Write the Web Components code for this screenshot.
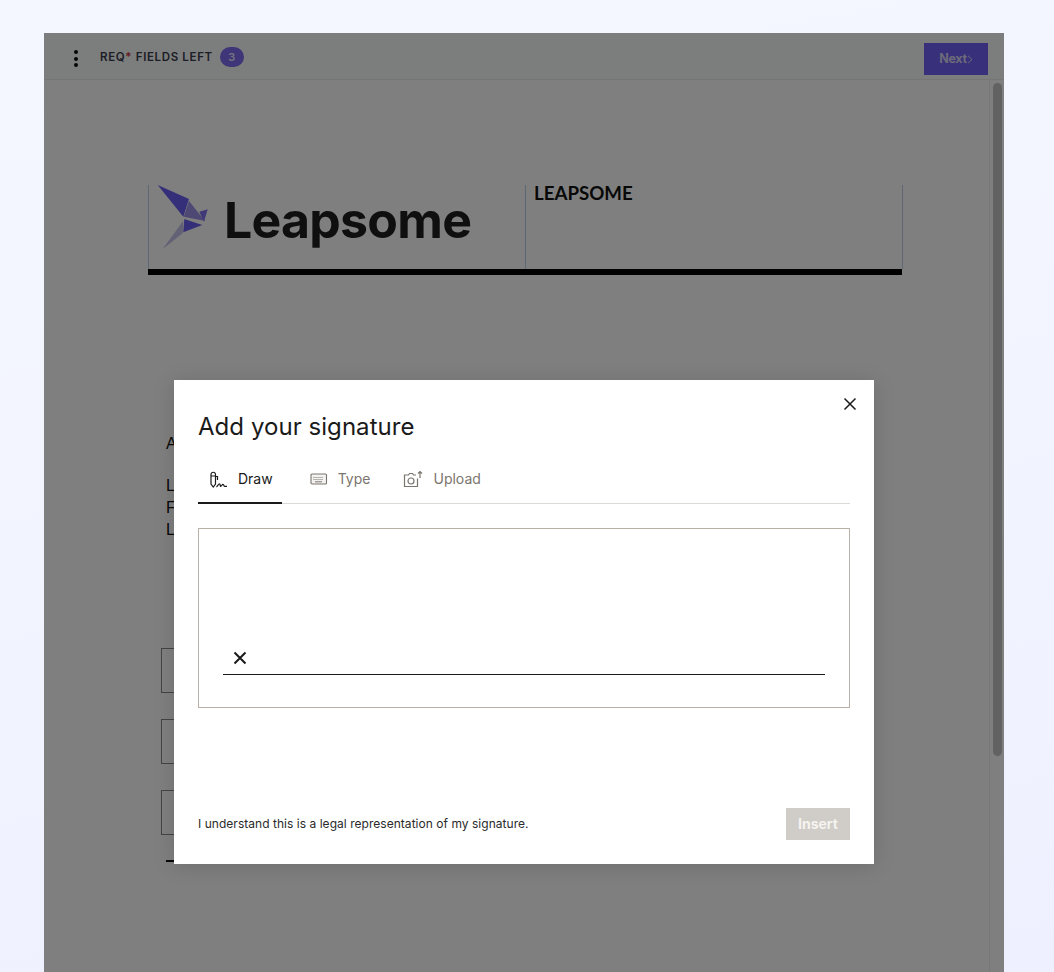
<!DOCTYPE html>
<html>
<head>
<meta charset="utf-8">
<style>
html, body { margin: 0; height: 972px; overflow: hidden; }
body {
  background: linear-gradient(170deg, #f4f7ff 0%, #f2f5ff 50%, #eef0ff 100%);
  padding: 33px 50px 0 44px;
  box-sizing: border-box;
  font-family: "Inter", "Liberation Sans", sans-serif;
}
</style>
</head>
<body>
<sign-frame>
  <sign-toolbar slot="toolbar" count="3"></sign-toolbar>
  <doc-view slot="doc"></doc-view>
  <signature-modal slot="modal"></signature-modal>
</sign-frame>

<script>
const frame_template = document.createElement('template');
frame_template.innerHTML = `
<style>
:host {
  display: block;
  position: relative;
  width: 960px;
  height: 939px;
  overflow: hidden;
  background: #fff;
}
#overlay {
  position: absolute;
  inset: 0;
  background: rgba(0, 0, 0, .5);
  display: flex;
  justify-content: center;
  align-items: flex-start;
  padding-top: 347px;
  box-sizing: border-box;
}
</style>
<slot name="toolbar"></slot>
<slot name="doc"></slot>
<div id="overlay"><slot name="modal"></slot></div>
`
class SignFrame extends HTMLElement {
  constructor() {
    super();
    this.attachShadow({ mode: 'open' });
    this.shadowRoot.appendChild(frame_template.content.cloneNode(true));
  }
}
customElements.define('sign-frame', SignFrame);

const toolbar_template = document.createElement('template');
toolbar_template.innerHTML = `
<style>
:host {
  display: flex;
  align-items: center;
  height: 47px;
  box-sizing: border-box;
  border-bottom: 1px solid #eaeaea;
  background: #f9fcfb;
  padding: 2px 16px 0 30px;
  color: #3a3a4c;
}
#dots { display: flex; flex-direction: column; gap: 2.5px; margin-right: 22px; margin-top: 3px; }
#dots i { display: block; width: 4px; height: 4px; border-radius: 50%; background: #0b0b0b; }
#label {
  font: 600 11.5px/1 "Inter", "Liberation Sans", sans-serif;
  letter-spacing: .65px;
  white-space: nowrap;
  margin-top: 2px;
}
#label b { color: #c2334a; font-weight: 600; }
#badge {
  margin-left: 7px;
  width: 24px;
  height: 20px;
  border-radius: 10px;
  background: #7c6df0;
  color: #e8e4ff;
  font: 600 11px/20px "Inter", "Liberation Sans", sans-serif;
  text-align: center;
}
#next {
  margin-left: auto;
  width: 64px;
  height: 32px;
  margin-top: 4px;
  background: #7060f5;
  color: #d8d4f4;
  font: 700 12.5px/32px "Inter", "Liberation Sans", sans-serif;
  letter-spacing: -.3px;
  display: flex;
  align-items: center;
  justify-content: center;
}
#next svg { display: block; }
</style>
<div id="dots"><i></i><i></i><i></i></div>
<div id="label">REQ<b>*</b> FIELDS LEFT</div>
<div id="badge"></div>
<div id="next">Next<svg width="6" height="9" viewBox="0 0 6 9" fill="none" stroke="#d8d4f4" stroke-width="1"><path d="M1 .8l4 3.700-4 3.700"/></svg></div>
`
class SignToolbar extends HTMLElement {
  constructor() {
    super();
    this.attachShadow({ mode: 'open' });
    this.shadowRoot.appendChild(toolbar_template.content.cloneNode(true));
    this.shadowRoot.querySelector('#badge').innerText = this.getAttribute('count');
  }
}
customElements.define('sign-toolbar', SignToolbar);

const doc_template = document.createElement('template');
doc_template.innerHTML = `
<style>
:host {
  display: flex;
  height: 892px;
  background: #fff;
}
#page {
  flex: 1;
  padding: 105px 0 0 104px;
  overflow: hidden;
}
#head {
  display: grid;
  grid-template-columns: 377px 377px;
  width: 755px;
  height: 84px;
  box-sizing: border-box;
  border-right: 1px solid #bcd0ea;
}
#head > div { border-left: 1px solid #bcd0ea; }
#bar { width: 754px; height: 6px; background: #000; }
#brand { display: flex; align-items: flex-start; }
#brand svg { display: block; flex: none; }
#wordmark {
  margin: 5px 0 0 15px;
  font: 700 50px/1.2 "Inter", "Liberation Sans", sans-serif;
  letter-spacing: -.75px;
  color: #1e1e1e;
}
#company {
  padding-left: 8px;
  font: 700 18.7px/17px "Lato", "Liberation Sans", sans-serif;
  color: #111;
}
#body {
  margin: 158px 0 0 18px;
  font: 16px/22px "Liberation Sans", sans-serif;
  color: #111;
}
#body p { margin: 0; }
#lines { margin-top: 20px !important; }
#fields { margin: 107px 0 0 13px; }
#fields div {
  width: 300px;
  height: 45px;
  box-sizing: border-box;
  border: 1px solid #888;
  margin-bottom: 26px;
}
#rule { width: 300px; height: 2px; background: #111; margin: -1px 0 0 18px; }
#gutter {
  flex: none;
  border-left: 1px solid #eceef0;
  padding: 3px 3px 0 3px;
  box-sizing: border-box;
  width: 15px;
}
#thumb { width: 9px; height: 673px; border-radius: 5px; background: #c4c4c4; }
</style>
<div id="page">
  <div id="head">
    <div id="brand">
      <svg width="60" height="72" viewBox="149 185 60 72">
        <polygon points="157.7,185 189,199 183.3,216.7" fill="#6b5ff2"/>
        <polygon points="189,201 205,221 183.7,216.7" fill="#9a93e8"/>
        <polygon points="184.3,219 202.3,225 183.3,232.3" fill="#6b5ff2"/>
        <polygon points="183.3,220.7 182.7,233.3 162.7,249" fill="#c4c2ea"/>
        <polygon points="199.3,211.7 207.7,209.3 204,221.7" fill="#7f74ee"/>
      </svg>
      <div id="wordmark">Leapsome</div>
    </div>
    <div id="company">LEAPSOME</div>
  </div>
  <div id="bar"></div>
  <div id="body">
    <p>A</p>
    <p id="lines">L<br>F<br>L</p>
  </div>
  <div id="fields"><div></div><div></div><div></div></div>
  <div id="rule"></div>
</div>
<div id="gutter"><div id="thumb"></div></div>
`
class DocView extends HTMLElement {
  constructor() {
    super();
    this.attachShadow({ mode: 'open' });
    this.shadowRoot.appendChild(doc_template.content.cloneNode(true));
  }
}
customElements.define('doc-view', DocView);

const tab_template = document.createElement('template');
tab_template.innerHTML = `
<style>
:host {
  display: flex;
  align-items: center;
  gap: 10px;
  height: 48px;
  padding: 0 9px 2px var(--tab-pad, 12px);
  margin-bottom: -1px;
  box-sizing: border-box;
  color: #7a756e;
  font: 14px/1 "Inter", "Liberation Sans", sans-serif;
}
:host([active]) {
  color: #1a1a1a;
  border-bottom: 2px solid #1a1a1a;
  padding-bottom: 0;
}
::slotted(svg) { display: block; }
</style>
<slot name="icon"></slot><slot></slot>
`
class SigTab extends HTMLElement {
  constructor() {
    super();
    this.attachShadow({ mode: 'open' });
    this.shadowRoot.appendChild(tab_template.content.cloneNode(true));
  }
}
customElements.define('sig-tab', SigTab);

const modal_template = document.createElement('template');
modal_template.innerHTML = `
<style>
:host {
  position: relative;
  width: 700px;
  height: 484px;
  box-sizing: border-box;
  padding: 24px;
  background: #fff;
  box-shadow: 0 2px 20px rgba(0, 0, 0, .14);
  color: #1a1a1a;
  display: flex;
  flex-direction: column;
}
#close { position: absolute; top: 16px; right: 16px; display: block; }
h2 {
  margin: 8px 0 0;
  font: 400 24px/30px "Inter", "Liberation Sans", sans-serif;
  letter-spacing: .05px;
  color: #1a1a1a;
}
#tabs {
  display: flex;
  gap: 15px;
  margin-top: 14px;
  border-bottom: 1px solid #dcdad7;
}
#pad {
  margin-top: 24px;
  height: 180px;
  box-sizing: border-box;
  border: 1px solid #b8b0a6;
  padding: 0 24px;
  display: flex;
  flex-direction: column;
  justify-content: flex-end;
}
#line {
  border-bottom: 1px solid #1a1a1a;
  padding: 0 0 9px 10px;
  margin-bottom: 32px;
}
#line svg { display: block; }
#foot {
  margin-top: auto;
  display: flex;
  align-items: center;
  justify-content: space-between;
}
#legal { font: 12px/16px "Inter", "Liberation Sans", sans-serif; letter-spacing: .035px; color: #2a2a2a; }
#insert {
  width: 64px;
  height: 32px;
  background: #d0ccc8;
  color: #f5f3f0;
  font: 700 14px/32px "Inter", "Liberation Sans", sans-serif;
  text-align: center;
}
</style>
<svg id="close" width="16" height="16" viewBox="0 0 16 16" fill="none" stroke="#1a1a1a" stroke-width="1.5"><path d="M2.5 2.5l11 11M13.5 2.5l-11 11"/></svg>
<h2>Add your signature</h2>
<div id="tabs"><slot name="tabs"></slot></div>
<div id="pad">
  <div id="line">
    <svg width="14" height="14" viewBox="0 0 14 14" fill="none" stroke="#1a1a1a" stroke-width="2"><path d="M1.5 1.5l11 11M12.5 1.5l-11 11"/></svg>
  </div>
</div>
<div id="foot">
  <div id="legal">I understand this is a legal representation of my signature.</div>
  <div id="insert">Insert</div>
</div>
`
class SignatureModal extends HTMLElement {
  constructor() {
    super();
    this.attachShadow({ mode: 'open' });
    this.shadowRoot.appendChild(modal_template.content.cloneNode(true));
    this.innerHTML = `
      <sig-tab slot="tabs" active>
        <svg slot="icon" width="18" height="18" viewBox="0 0 18 18" fill="none" stroke="#1a1a1a" stroke-width="1.2">
          <path d="M1 6h4.500v8l-2.250 3L1 14zM1 4.500a2.250 2.250 0 0 1 4.500 0V6H1zM5.500 6.500H7.500V10"/>
          <path d="M6.500 17c1.200-1 2.300-3.500 3.200-3s.2 2.800 1.200 2.300 1.300-2.300 2.300-1.800.5 1.900 1.500 1.900h2.300"/>
        </svg>
        Draw
      </sig-tab>
      <sig-tab slot="tabs" style="--tab-pad:13px">
        <svg slot="icon" width="18" height="14" viewBox="0 0 18 14" fill="#f4f2f0" stroke="#7a756e" stroke-width="1.1">
          <rect x="1" y="2" width="15.500" height="10" rx="1"/>
          <path d="M3.500 5.500h10M3.500 7.500h10" stroke-width="1" stroke-dasharray="1 1"/>
          <path d="M5 9.800h7" stroke-width="1"/>
        </svg>
        Type
      </sig-tab>
      <sig-tab slot="tabs" style="--tab-pad:9px">
        <svg slot="icon" width="20" height="18" viewBox="0 0 20 18" fill="none" stroke="#7a756e" stroke-width="1.2">
          <path d="M13 5H10.500L9.500 3.500H6.500L5.500 5H1.500v11.500H14.500V8.500"/>
          <circle cx="8" cy="11" r="3"/>
          <path d="M17 8V1.500M15 3.500l2-2 2 2"/>
        </svg>
        Upload
      </sig-tab>`;
  }
}
customElements.define('signature-modal', SignatureModal);
</script>
</body>
</html>
